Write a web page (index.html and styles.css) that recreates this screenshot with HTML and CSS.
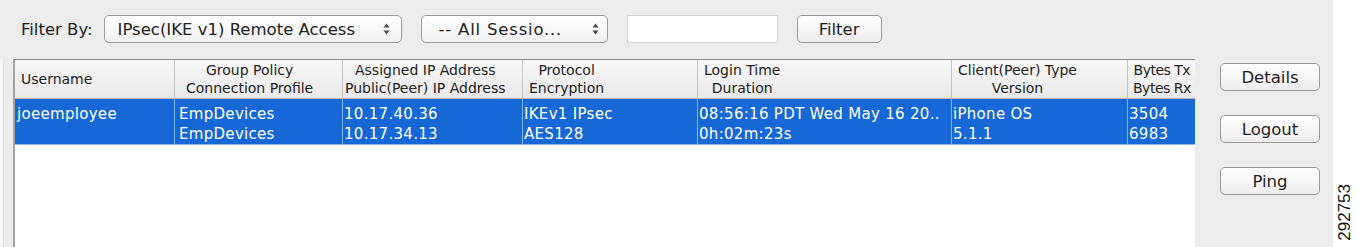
FILE: index.html
```html
<!DOCTYPE html>
<html>
<head>
<meta charset="utf-8">
<link rel="stylesheet" href="styles.css">
</head>
<body>
<div class="panel">
  <div class="toolbar">
    <span class="label">Filter By:</span>
    <div class="select sel-type">
      <span class="sel-text">IPsec(IKE v1) Remote Access</span>
      <svg class="arrows" width="7" height="12" viewBox="0 0 7 12"><path d="M3.5 0.5 L6.5 4.5 L0.5 4.5 Z M3.5 11.5 L6.5 7.5 L0.5 7.5 Z" fill="#4a4a4a"/></svg>
    </div>
    <div class="select sel-sess">
      <span class="sel-text">-- All Sessio...</span>
      <svg class="arrows" width="7" height="12" viewBox="0 0 7 12"><path d="M3.5 0.5 L6.5 4.5 L0.5 4.5 Z M3.5 11.5 L6.5 7.5 L0.5 7.5 Z" fill="#4a4a4a"/></svg>
    </div>
    <div class="textbox"></div>
    <div class="btn btn-filter">Filter</div>
  </div>
  <div class="main">
    <div class="edge"></div>
    <div class="table">
      <div class="row head">
        <div class="cell c1"><span class="hb single">Username</span></div>
        <div class="cell c2 p11"><span class="hb">Group Policy<br>Connection Profile</span></div>
        <div class="cell c3 p2"><span class="hb">Assigned IP Address<br>Public(Peer) IP Address</span></div>
        <div class="cell c4 p6"><span class="hb">Protocol<br>Encryption</span></div>
        <div class="cell c5 p6"><span class="hb">Login Time<br>Duration</span></div>
        <div class="cell c6 p6"><span class="hb">Client(Peer) Type<br>Version</span></div>
        <div class="cell c7 p5 tight"><span class="hb">Bytes Tx<br>Bytes Rx</span></div>
      </div>
      <div class="row sel">
        <div class="cell c1 d3">joeemployee</div>
        <div class="cell c2 d4">EmpDevices<br>EmpDevices</div>
        <div class="cell c3 d1">10.17.40.36<br>10.17.34.13</div>
        <div class="cell c4 d1">IKEv1 IPsec<br>AES128</div>
        <div class="cell c5 d1">08:56:16 PDT Wed May 16 20..<br>0h:02m:23s</div>
        <div class="cell c6 d1">iPhone OS<br>5.1.1</div>
        <div class="cell c7 d1">3504<br>6983</div>
      </div>
    </div>
    <div class="actions">
      <div class="btn">Details</div>
      <div class="btn">Logout</div>
      <div class="btn">Ping</div>
    </div>
  </div>
</div>
<div class="side"><span class="figno">292753</span></div>
</body>
</html>
```

FILE: styles.css
```css
html, body {
  margin: 0;
  padding: 0;
}
body {
  width: 1356px;
  height: 247px;
  overflow: hidden;
  display: flex;
  background: #ffffff;
  font-family: "DejaVu Sans", "Liberation Sans", sans-serif;
  color: #222222;
}
.panel {
  width: 1333px;
  height: 247px;
  background: #ececec;
  display: flex;
  flex-direction: column;
}
.side {
  flex: 1;
  display: flex;
  flex-direction: column;
  justify-content: flex-end;
  align-items: center;
  padding-bottom: 6px;
}
.figno {
  writing-mode: vertical-rl;
  transform: rotate(180deg);
  font-family: "Liberation Sans", Arial, sans-serif;
  font-size: 17px;
  color: #111;
  line-height: 1;
}
.toolbar {
  height: 59px;
  box-sizing: border-box;
  padding: 15px 0 0 21px;
  display: flex;
  align-items: flex-start;
}
.label {
  font-size: 16.5px;
  line-height: 30px;
  margin-right: 11px;
}
.select {
  height: 28px;
  box-sizing: border-box;
  border: 1px solid #9d9d9d;
  border-radius: 5px;
  background: linear-gradient(#ffffff, #f1f1f1);
  display: flex;
  align-items: center;
  justify-content: space-between;
  font-size: 16.5px;
  margin-right: 19px;
}
.sel-type {
  width: 298px;
  padding: 0 11px 0 13px;
}
.sel-sess {
  width: 187px;
  padding: 0 8px 0 17px;
}
.sel-sess .sel-text {
  letter-spacing: 0.8px;
}
.sel-text {
  white-space: nowrap;
}
.arrows {
  display: block;
}
.textbox {
  width: 151px;
  height: 28px;
  box-sizing: border-box;
  background: #ffffff;
  border: 1px solid #d2d2d2;
  margin-right: 19px;
}
.btn {
  width: 85px;
  height: 28px;
  box-sizing: border-box;
  border: 1px solid #9a9a9a;
  border-radius: 5px;
  background: linear-gradient(#ffffff, #ededed);
  font-size: 16.5px;
  display: flex;
  align-items: center;
  justify-content: center;
  color: #1e1e1e;
}
.main {
  flex: 1;
  display: flex;
  min-height: 0;
}
.edge {
  width: 13px;
  flex: none;
  box-sizing: border-box;
  border-left: 3px solid #f4f4f4;
  background: linear-gradient(to right, #e2e2e2 0, #e2e2e2 1px, #ececec 1px);
}
.table {
  width: 1182px;
  flex: none;
  box-sizing: border-box;
  background: #ffffff;
  border-top: 1px solid #8d8d8d;
  border-left: 2px solid #a2a2a2;
}
.row {
  display: flex;
}
.cell {
  box-sizing: border-box;
  overflow: hidden;
  white-space: nowrap;
}
.c1 { width: 160px; }
.c2 { width: 168px; }
.c3 { width: 180px; }
.c4 { width: 175px; }
.c5 { width: 254px; }
.c6 { width: 176px; }
.c7 { width: 67px; }
.head {
  height: 39px;
  background: linear-gradient(#f8f8f8, #e9e9e9);
  border-bottom: 1px solid #b8b8b8;
  box-sizing: border-box;
  font-size: 14px;
  line-height: 18px;
}
.head .cell {
  border-right: 1px solid #c4c4c4;
  display: flex;
  align-items: center;
}
.head .cell:last-child {
  border-right: none;
}
.head .c1 { padding-left: 6px; }
.p11 { padding-left: 11px; }
.p2 { padding-left: 2px; }
.p5 { padding-left: 5px; }
.p6 { padding-left: 6px; }
.tight {
  letter-spacing: -0.5px;
}
.hb {
  display: inline-block;
  text-align: center;
}
.sel {
  height: 46px;
  box-sizing: border-box;
  background: #1668d6;
  border-bottom: 1px solid #8ab8ef;
  color: #ffffff;
  font-size: 15px;
  line-height: 20px;
  letter-spacing: 0.3px;
}
.sel .cell {
  border-right: 1px solid #86b4ec;
  padding-top: 5px;
}
.sel .cell:last-child {
  border-right: none;
}
.d1 { padding-left: 1px; }
.d3 { padding-left: 2px; }
.d4 { padding-left: 4px; }
.actions {
  flex: 1;
  display: flex;
  flex-direction: column;
  align-items: flex-start;
  padding: 4px 0 0 25px;
  gap: 24px;
}
.actions .btn {
  width: 100px;
}
```
